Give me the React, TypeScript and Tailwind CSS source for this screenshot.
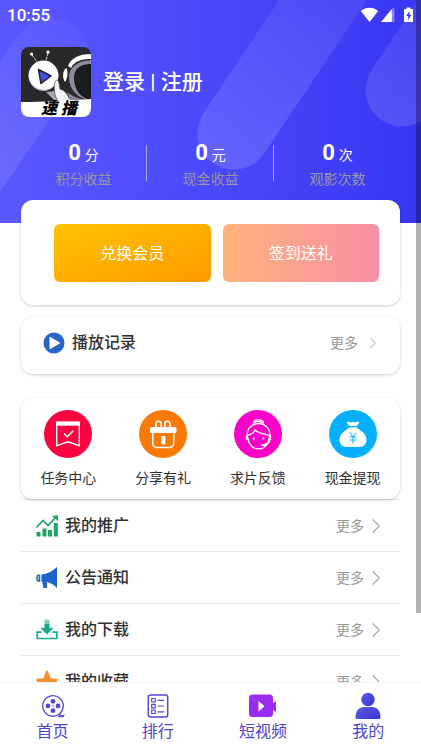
import type { ReactNode } from 'react';

const stats = [
  { value: '0', unit: '分', label: '积分收益' },
  { value: '0', unit: '元', label: '现金收益' },
  { value: '0', unit: '次', label: '观影次数' },
];

const shortcuts = [
  { label: '任务中心', color: 'bg-[#fb0240]', icon: <TaskIcon /> },
  { label: '分享有礼', color: 'bg-[#fb7a05]', icon: <GiftIcon /> },
  { label: '求片反馈', color: 'bg-[#fb02c8]', icon: <ServiceIcon /> },
  { label: '现金提现', color: 'bg-[#04affb]', icon: <MoneyIcon /> },
];

const menu = [
  { label: '我的推广', icon: <ChartIcon /> },
  { label: '公告通知', icon: <HornIcon /> },
  { label: '我的下载', icon: <DownloadIcon /> },
  { label: '我的收藏', icon: <StarIcon /> },
];

const tabs = [
  { label: '首页', icon: <ReelIcon /> },
  { label: '排行', icon: <RankIcon /> },
  { label: '短视频', icon: <VideoIcon /> },
  { label: '我的', icon: <UserIcon /> },
];

function TaskIcon() {
  return (
    <svg viewBox="0 0 48 48" className="size-12" fill="none" stroke="#fff" aria-hidden="true">
      <path d="M12.7 12.5h22.6v23.2L24 31.800l-11.300 3.900z" strokeWidth="1.4" />
      <path d="M12 11.5h24v4.2H12z" fill="#fff" stroke="none" />
      <path d="m20 23.5 3.3 3.2 6-6" strokeWidth="1.5" />
    </svg>
  );
}

function GiftIcon() {
  return (
    <svg viewBox="0 0 48 48" className="size-12" fill="none" stroke="#fff" aria-hidden="true">
      <path d="M17 18v-4.2a2.6 2.6 0 0 1 5.2 0V18M25.8 18v-4.2a2.6 2.6 0 0 1 5.2 0V18" strokeWidth="1.6" />
      <rect x="11" y="17" width="26.5" height="6" rx="1.5" fill="#fff" stroke="none" />
      <path d="M13.7 23v10.5a4 4 0 0 0 4 4h13a4 4 0 0 0 4-4V23" strokeWidth="1.5" />
      <rect x="22.2" y="26" width="4.2" height="8.5" rx="1.6" fill="#fff" stroke="none" />
    </svg>
  );
}

function ServiceIcon() {
  return (
    <svg viewBox="0 0 48 48" className="size-12" fill="none" stroke="#fff" strokeWidth="1.3" strokeLinecap="round" aria-hidden="true">
      <path d="M20 14c-1-2.800 1.500-4.200 4.500-4.200s5.500 1.400 4.500 4.200" />
      <path d="M20.500 12.300c2.500-1 5.500-1 8 0" />
      <path d="M13.300 26c-1.500-16.500 23.900-16.500 22.400 0" />
      <path d="M14 28c1 14.500 20 14.500 21 0" />
      <path d="M14 25c3.700-.5 5.800-2.400 7-5 3.500 3.500 9 3.500 14 5.500" />
      <path d="M12.800 26v3M36.200 26v3" strokeWidth="2" />
      <path d="M35.500 31c-1.500 2.700-4 4-7.500 4.200" strokeWidth="1.800" />
      <path d="M19.800 28.300v.5M29.300 28.300v.5" strokeWidth="2" />
    </svg>
  );
}

function MoneyIcon() {
  return (
    <svg viewBox="0 0 48 48" className="size-12" aria-hidden="true">
      <path d="M18.500 11.500c2.500.3 3.500 1.700 5.500.3 2 1.400 3 0 5.500-.3 1.300.3.8 1.600-1.800 4.500h-7.400c-2.600-2.900-3.100-4.200-1.800-4.500z" fill="#fff" />
      <path d="M20.500 17.300h7c2 2.700 10 5 10 12.600 0 4.700-3.300 7.100-8 7.100h-11c-4.700 0-8-2.400-8-7.100 0-7.600 8-9.900 10-12.600z" fill="#fff" />
      <path d="m20.600 22.500 3.400 4.500 3.400-4.500M20.500 27h7M20.500 30h7M24 27v6.500" fill="none" stroke="#04affb" strokeWidth="1" />
    </svg>
  );
}

function ChartIcon() {
  return (
    <svg viewBox="0 0 24 24" className="size-6" aria-hidden="true">
      <path d="M1.500 18h4v4.500h-4zM7.500 14.500h4v8h-4zM13 16h4v6.500h-4zM18.800 9h4v13.500h-4z" fill="#1fa463" />
      <path d="m1.500 13.500 6.500-7 5 5 7.500-8" fill="none" stroke="#1fa463" strokeWidth="1.700" />
      <path d="m17 2 6-.7V7z" fill="#1fa463" />
    </svg>
  );
}

function HornIcon() {
  return (
    <svg viewBox="0 0 24 24" className="size-6" fill="#1c63cb" aria-hidden="true">
      <path d="M6.500 8.500c6-.5 10.500-3 15.500-7.500v21c-3-3.200-6-5-10-6v6H8.500l-1.300-6.300h-.7z" />
      <path d="M5.300 8.500v7.300H3.800a2.500 2.500 0 0 1-2.500-2.500V11a2.500 2.500 0 0 1 2.500-2.500z" />
      <path d="M3.300 10v4.200" stroke="#fff" strokeWidth=".8" />
    </svg>
  );
}

function DownloadIcon() {
  return (
    <svg viewBox="0 0 24 24" className="size-6" aria-hidden="true">
      <path d="M9.500 5.500h5v4.300h4.200L12 16.500 5.300 9.800h4.200zM9.500 3.500h5v1.200h-5zM9.500 1.800h5v.8h-5z" fill="#1ba989" />
      <path d="M6.500 14.200H2.200v6.300h19.600v-6.300h-4.300" fill="none" stroke="#1ba989" strokeWidth="1.700" />
    </svg>
  );
}

function StarIcon() {
  return (
    <svg viewBox="0 0 24 24" className="size-6" fill="#f29030" aria-hidden="true">
      <path d="M12 .8c.6 0 1 .4 1.300 1l2.200 6.400 6.200.6c1.300.2 1.600 1.200.7 2l-4.500 4.400 1.300 5.500c.2 1.200-.7 1.800-1.700 1.200L12 18.600l-5.500 3.300c-1 .6-1.900 0-1.700-1.200l1.300-5.500-4.500-4.400c-.9-.8-.6-1.800.7-2l6.200-.6 2.200-6.400c.3-.6.7-1 1.300-1z" />
    </svg>
  );
}

function ReelIcon() {
  return (
    <svg viewBox="0 0 28 28" className="size-7" aria-hidden="true">
      <path d="M20 22.300A10.300 10.300 0 1 1 24.300 14c-.2 3.500-1.500 6-3.800 8.300 1 1.500 2.500 1.800 4 1.200l-.5 1h-5" fill="none" stroke="#5049d5" strokeWidth="1.300" />
      <g fill="#5049d5">
        <circle cx="14" cy="9.300" r="2.400" />
        <circle cx="9" cy="13.900" r="2.400" />
        <circle cx="19" cy="13.900" r="2.400" />
        <circle cx="14" cy="18.700" r="2.400" />
        <circle cx="14" cy="14" r=".8" />
      </g>
    </svg>
  );
}

function RankIcon() {
  return (
    <svg viewBox="0 0 28 28" className="size-7" fill="none" stroke="#5049d5" strokeWidth="1.200" aria-hidden="true">
      <rect x="4.300" y="3" width="19.400" height="22" rx="2.200" strokeWidth="1.500" />
      <path d="M7.700 6.500h3.500V10H7.700zM7.700 12.300h3.500v3.500H7.700zM7.700 18h3.500v3.500H7.700zM13.500 8.300H20M13.500 14H20M13.500 19.800H20" />
    </svg>
  );
}

function VideoIcon() {
  return (
    <svg viewBox="0 0 28 28" className="size-7" aria-hidden="true">
      <rect x="0" y="2.500" width="24" height="22.500" rx="3.500" fill="#9a2df0" />
      <path d="M23 11h1.500l1.200-1.500H27v10h-1.300L24.500 18H23z" fill="#9a2df0" />
      <path d="M9.500 9v10.500l6-5.200z" fill="#fff" />
    </svg>
  );
}

function UserIcon() {
  return (
    <svg viewBox="0 0 28 28" className="size-7" aria-hidden="true">
      <defs>
        <linearGradient id="user" x1="0" y1="0" x2="1" y2="1">
          <stop offset="0" stopColor="#605ce8" />
          <stop offset="1" stopColor="#3833d2" />
        </linearGradient>
      </defs>
      <circle cx="14" cy="7.500" r="6.700" fill="url(#user)" />
      <path d="M1.500 25.300C1.500 19 5 15 10 15h8c5 0 8.500 4 8.500 10.300 0 .9-.6 1.700-1.800 1.700H3.300c-1.200 0-1.800-.8-1.800-1.700z" fill="url(#user)" />
    </svg>
  );
}

function Chevron({ className }: { className: string }) {
  return (
    <svg viewBox="0 0 8 16" className={className} fill="none" stroke="#aaa" strokeWidth="1.300" aria-hidden="true">
      <path d="m.7 1.500 6.500 6.500-6.500 6.500" />
    </svg>
  );
}

function Avatar() {
  return (
    <div className="relative size-[70px] overflow-hidden rounded-lg bg-[#29292b]">
      <svg viewBox="0 0 70 70" className="size-full" aria-hidden="true">
        <path d="m11 8 5 7M27 6l-2 8" stroke="#ddd" strokeWidth="1" strokeDasharray="3 1" />
        <circle cx="10.500" cy="7" r="1.600" fill="#fff" />
        <circle cx="27" cy="5" r="1.600" fill="#fff" />
        {/* helmet */}
        <path d="M47 19C50 11 58 7 70 7v5c-9 0-17 2-20 9z" fill="#fff" />
        <path d="M48 30c0-9 7-16 22-17v40c-14-1-22-11-22-23z" fill="#8e8a9c" />
        <path d="M53 31c0-9 6-14 17-14v36c-11-2-17-11-17-22z" fill="#1b1b22" />
        <path d="M45.500 21c-4 2-4.500 10-1.500 14 3-4 3-10 1.500-14z" fill="#fff" />
        {/* head */}
        <circle cx="22.500" cy="28.500" r="15" fill="#fff" />
        <path d="M9 35c5 7 13 9 20 7l3-2c-4 5-17 7-23-5z" fill="#b5b3bf" />
        <path d="m17.500 22.500 2.500 14 10-7.500z" fill="#4050e8" stroke="#222" strokeWidth="1.500" strokeLinejoin="round" />
        {/* hand */}
        <path d="m25 45 8-1 4 9h-4z" fill="#a9a5b5" />
        <path d="M34 35c1-3 4-2 4 1l1 6c4 1 7 4 9 9l4 5H38c-4-6-6-13-4-21z" fill="#f4f3f7" stroke="#333" strokeWidth=".6" />
        <path d="M46 45c6 5 14 8 24 8v4H51z" fill="#89879a" />
        <path d="M0 55c20 0 45-1 70-3v18H0z" fill="#fff" />
      </svg>
      <span className="absolute top-[54px] left-5 flex gap-1 text-base leading-4 font-black whitespace-nowrap text-black italic">
        <span>速</span>
        <span>播</span>
      </span>
    </div>
  );
}

function StatusIcons() {
  return (
    <svg viewBox="0 0 54 18" className="h-[18px] w-[54px]" fill="#fff" aria-hidden="true">
      <path d="M.8 5C6 .8 13 .8 18.200 5L9.500 16z" />
      <path d="M31.800 3v13H21z" />
      <path d="M31.800 3l2.500-1.500V16h-2.500z" opacity=".4" />
      <path d="M46.500 1.500h4V3H52c.7 0 1 .4 1 1v11c0 .7-.4 1-1 1h-7c-.7 0-1-.4-1-1V4c0-.6.4-1 1-1h1.500z" />
      <path d="m49.500 5-3.300 5h2v4l3.200-5h-2z" fill="#3f3bf5" />
    </svg>
  );
}

function HeaderShapes() {
  return (
    <svg
      viewBox="0 0 421 223"
      preserveAspectRatio="xMidYMid slice"
      className="absolute inset-0 size-full"
      fill="none"
      strokeLinecap="round"
      strokeWidth="73"
      aria-hidden="true"
    >
      <defs>
        <linearGradient id="stripe" gradientUnits="userSpaceOnUse" x1="0" y1="0" x2="0" y2="170">
          <stop offset="0" stopColor="#fff" stopOpacity=".07" />
          <stop offset="1" stopColor="#fff" stopOpacity=".15" />
        </linearGradient>
        <linearGradient id="stripeLeft" gradientUnits="userSpaceOnUse" x1="70" y1="20" x2="0" y2="150">
          <stop offset="0" stopColor="#fff" stopOpacity=".03" />
          <stop offset="1" stopColor="#fff" stopOpacity=".1" />
        </linearGradient>
      </defs>
      <path d="M51 53-50 200" stroke="url(#stripeLeft)" />
      <path d="M234 133 354-46" stroke="url(#stripe)" />
      <path d="M402 90 482-30" stroke="url(#stripe)" />
    </svg>
  );
}

function Card({ className, children }: { className: string; children: ReactNode }) {
  return <section className={`relative mx-[21px] rounded-xl bg-white shadow-[0_1px_3px_rgba(0,0,0,0.2)] ${className}`}>{children}</section>;
}

export default function App() {
  return (
    <div className="relative flex h-screen flex-col overflow-hidden bg-white font-['Roboto','Noto_Sans_CJK_SC',sans-serif] text-[#303030]">
      <main className="min-h-0 flex-1 overflow-hidden">
        <header className="relative bg-linear-to-r from-[#5b58ff] via-[#4b48fc] to-[#3936f2] pb-[34px] text-white">
          <HeaderShapes />
          <div className="relative flex h-[30px] items-center justify-between px-[7px]">
            <span className="text-[17px] leading-6 font-medium">10:55</span>
            <StatusIcons />
          </div>
          <div className="relative mt-[17px] flex items-center gap-3 px-[21px]">
            <Avatar />
            <a href="#login" className="text-[21px] leading-7 font-medium">登录 | 注册</a>
          </div>
          <dl className="relative mx-5 mt-6 grid grid-cols-3">
            {stats.map((stat, i) => (
              <div key={stat.label} className="relative flex flex-col-reverse items-center">
                <dt className="text-sm leading-5 text-[#98959f]">{stat.label}</dt>
                <dd className="flex h-7 items-baseline gap-1 pb-1">
                  <b className="text-[22px] leading-6">{stat.value}</b>
                  <span className="text-sm leading-6">{stat.unit}</span>
                </dd>
                {i < 2 && <i className="absolute top-1 right-0 h-9 w-px bg-[#aaa6c8]" />}
              </div>
            ))}
          </dl>
        </header>

        <Card className="-mt-[23px] grid grid-cols-2 gap-3 pt-6 pr-[21px] pb-[23px] pl-[33px]">
          <button type="button" className="h-[58px] rounded-md bg-linear-to-br from-[#fdc300] to-[#ff9900] pt-0.5 text-base text-white">兑换会员</button>
          <button type="button" className="h-[58px] rounded-md bg-linear-to-r from-[#ffb27a] to-[#f68fa4] pt-0.5 text-base text-white">签到送礼</button>
        </Card>

        <Card className="mt-3">
          <a href="#history" className="flex h-[57px] items-center pr-6 pb-[5px] pl-[22px]">
            <svg viewBox="0 0 22 22" className="size-[22px]" aria-hidden="true">
              <circle cx="11" cy="11" r="10.500" fill="#2765c7" />
              <path d="M7 5.300v11.400l9.700-5.700z" fill="#fff" stroke="#fff" strokeLinejoin="round" />
            </svg>
            <span className="ml-[7px] flex-1 text-base font-medium">播放记录</span>
            <span className="mr-3 text-sm text-[#999]">更多</span>
            <Chevron className="h-3 w-1.5" />
          </a>
        </Card>

        <Card className="mt-6">
          <ul className="grid h-[101px] grid-cols-4 pt-3">
            {shortcuts.map((item) => (
              <li key={item.label}>
                <a href="#shortcut" className="flex flex-col items-center gap-2">
                  <span className={`rounded-full ${item.color}`}>{item.icon}</span>
                  <span className="text-sm leading-6">{item.label}</span>
                </a>
              </li>
            ))}
          </ul>
        </Card>

        <ul className="mx-[21px]">
          {menu.map((item) => (
            <li key={item.label} className="border-t border-[#e8e8e8]">
              <a href="#menu" className="flex h-[51px] items-center pr-5 pl-3.5">
                {item.icon}
                <span className="ml-1.5 flex-1 text-base font-medium">{item.label}</span>
                <span className="mr-2 text-sm text-[#999]">更多</span>
                <Chevron className="h-4 w-2" />
              </a>
            </li>
          ))}
        </ul>
      </main>

      <nav className="grid h-[66px] shrink-0 grid-cols-4 border-t border-[#f0f0f0] bg-white pt-[9px] text-[#4a43d0]">
        {tabs.map((tab) => (
          <a key={tab.label} href="#tab" className="flex flex-col items-center">
            {tab.icon}
            <span className="text-base leading-6">{tab.label}</span>
          </a>
        ))}
      </nav>

      {/* scroll thumb */}
      <div className="absolute top-0 right-0 h-[82%] w-[5px] bg-black/30" />
    </div>
  );
}
